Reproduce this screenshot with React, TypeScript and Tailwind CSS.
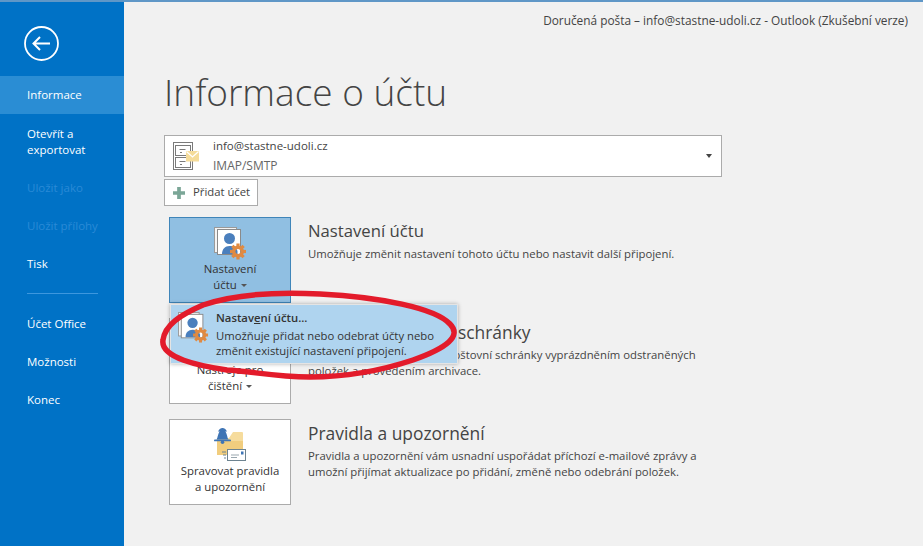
import React from "react";

const font = { fontFamily: '"Open Sans", "Noto Sans", sans-serif' };

function NavItem({ label, active, disabled }: { label: React.ReactNode; active?: boolean; disabled?: boolean }) {
  return (
    <div
      className={`flex min-h-[38px] items-center pl-[27px] text-[11.5px] leading-[16px] ${
        active ? "bg-[#2a8dd4] text-white" : disabled ? "text-[#2a8ad6]" : "text-white"
      }`}
    >
      <span>{label}</span>
    </div>
  );
}

function PersonGear({ size = 33 }: { size?: number }) {
  return (
    <svg width={size} height={size} viewBox="0 0 33 33" className="shrink-0">
      <rect x="0.500" y="0.500" width="22" height="25" fill="#f4f4f4" stroke="#9a9a9a" />
      <rect x="3.500" y="2.500" width="23" height="25" fill="#fff" stroke="#8a8a8a" />
      <circle cx="15.500" cy="11.500" r="5.500" fill="#4a7fbd" />
      <path d="M8 27c0-5 3-8 7.500-8s7 2 8 5v3z" fill="#4a7fbd" />
      <g transform="translate(24 24.500)" fill="#e08a42">
        {[0, 45, 90, 135, 180, 225, 270, 315].map((a) => (
          <rect key={a} x="-1.600" y="-8" width="3.200" height="4" transform={`rotate(${a})`} />
        ))}
        <circle r="4.300" fill="none" stroke="#e08a42" strokeWidth="3.400" />
      </g>
    </svg>
  );
}

function Cabinet() {
  return (
    <svg width="27" height="28" viewBox="0 0 27 28" className="shrink-0">
      <g fill="none" stroke="#7a7a7a">
        <rect x="0.500" y="0.500" width="19" height="27" />
        <rect x="2.500" y="3.500" width="15" height="10" />
        <rect x="2.500" y="15.500" width="15" height="10" />
        <path d="M6.500 7.500h6M6.500 19.500h6M7 10.500h2M7 22.500h2" />
      </g>
      <rect x="13" y="9" width="13" height="10.500" fill="#f5dc9a" />
      <path d="M13.500 9.500l6 5.500 6-5.500" fill="none" stroke="#fff" strokeWidth="1.200" />
    </svg>
  );
}

function BellFolder() {
  return (
    <svg width="32" height="33" viewBox="0 0 32 33" className="shrink-0">
      <path d="M3 10h12l4-6h9a1 1 0 0 1 1 1v21H3z" fill="#f6dc9d" />
      <path d="M3 13h26v14H3z" fill="#f1cd7e" />
      <path d="M2.500 11.500c1.500-1 1-8 6-11.500 5 3.500 4.500 10.500 6 11.500z" fill="#3f75b5" />
      <path d="M4 3.500C5 1 7 0 8.500 0S12 1 13 3.500z" fill="#3f75b5" />
      <rect x="0" y="11.500" width="17" height="1.800" rx="0.900" fill="#3f75b5" />
      <circle cx="8.500" cy="14.300" r="1.800" fill="#3f75b5" />
      <rect x="13.500" y="21.500" width="18" height="11" fill="#fff" stroke="#6d8390" />
      <rect x="27" y="23.500" width="2.500" height="3" fill="#3f75b5" />
      <path d="M17 27h8M17 29.500h6" stroke="#9aa7af" />
      <path d="M8 24h4M9 27h3M10 30h2" stroke="#6d8390" />
    </svg>
  );
}

function Caret() {
  return <span className="ml-[4px] inline-block h-0 w-0 border-x-[3px] border-t-[3px] border-x-transparent border-t-[#555] align-middle" />;
}

function Section({
  button,
  title,
  titleSize,
  body,
  active,
}: {
  button: React.ReactNode;
  title: string;
  titleSize: string;
  body: React.ReactNode;
  active?: boolean;
}) {
  return (
    <div className="flex h-[86px]">
      <div
        className={`ml-[5px] flex h-[86px] w-[122px] shrink-0 flex-col items-center justify-end border pb-[9px] text-center text-[11.4px] leading-[16px] text-[#333] ${
          active ? "border-[#3f85b9] bg-[#90bfe2]" : "border-[#ababab] bg-white"
        }`}
      >
        {button}
      </div>
      <div className="ml-[17px] pt-[2px]">
        <div className={`whitespace-nowrap ${titleSize} leading-[24px] text-[#444]`}>{title}</div>
        <div className="mt-[3px] whitespace-nowrap text-[11.33px] leading-[16px] text-[#444]">{body}</div>
      </div>
    </div>
  );
}

export default function App() {
  return (
    <div className="relative flex h-[546px] w-[923px] flex-col overflow-hidden bg-[#f1f1f1]" style={font}>
      <div className="h-[2px] shrink-0 bg-[#5f97c7]" />
      <div className="flex min-h-0 flex-1">
        <aside className="flex w-[124px] shrink-0 flex-col bg-[#0072c6]">
          <div className="flex h-[74px] items-start pl-[24px] pt-[24px]">
            <svg width="35" height="35" viewBox="0 0 35 35">
              <circle cx="17.500" cy="17.500" r="16.500" fill="none" stroke="#fff" strokeWidth="1.800" />
              <path d="M26 17.500H10M16 11l-6.500 6.500L16 24" fill="none" stroke="#fff" strokeWidth="2" />
            </svg>
          </div>
          <NavItem label="Informace" active />
          <div className="pb-[11px] pl-[27px] pt-[12px] text-[11.5px] leading-[16px] text-white">
            Otevřít a<br />exportovat
          </div>
          <NavItem label="Uložit jako" disabled />
          <NavItem label="Uložit přílohy" disabled />
          <NavItem label="Tisk" />
          <div className="mb-[11px] ml-[27px] mt-[10px] h-px w-[71px] bg-[#3d97de]" />
          <NavItem label="Účet Office" />
          <NavItem label="Možnosti" />
          <NavItem label="Konec" />
        </aside>
        <main className="min-w-0 flex-1 pl-[40px]">
          <div className="flex h-[34px] items-start justify-end pr-[15px] pt-[11px] text-[11.85px] leading-[15px] text-[#444]">
            Doručená pošta – info@stastne-udoli.cz - Outlook (Zkušební verze)
          </div>
          <h1 className="mt-[27px] h-[72px] text-[37px] font-light leading-[58px] text-[#444]">Informace o účtu</h1>
          <div className="flex h-[42px] w-[558px] items-center border border-[#ababab] bg-white pl-[8px] pr-[9px]">
            <Cabinet />
            <div className="ml-[13px] flex-1 leading-[19px] text-[#444]">
              <div className="-mt-[1px] text-[11.5px]">info@stastne-udoli.cz</div>
              <div className="mt-[1px] text-[12px] text-[#666]">IMAP/SMTP</div>
            </div>
            <span className="h-0 w-0 border-x-[3.500px] border-t-[4px] border-x-transparent border-t-[#444]" />
          </div>
          <div className="mt-[2px] flex h-[27px] w-[94px] items-center border border-[#ababab] bg-white pl-[8px] text-[11.3px] text-[#444]">
            <svg width="12" height="12" viewBox="0 0 13 13" className="shrink-0">
              <path d="M4.500 0h4v4.500H13v4H8.500V13h-4V8.500H0v-4h4.500z" fill="#7ba697" />
            </svg>
            <span className="ml-[8px]">Přidat účet</span>
          </div>
          <div className="mt-[11px] flex flex-col gap-[15px]">
            <Section
              active
              button={
                <>
                  <div className="mb-[1px]"><PersonGear /></div>
                  <div>Nastavení</div>
                  <div>účtu<Caret /></div>
                </>
              }
              title="Nastavení účtu"
              titleSize="text-[16.7px]"
              body="Umožňuje změnit nastavení tohoto účtu nebo nastavit další připojení."
            />
            <Section
              button={
                <>
                  <div>Nástroje pro</div>
                  <div>čištění<Caret /></div>
                </>
              }
              title="Vyčištění poštovní schránky"
              titleSize="text-[17.4px]"
              body={<>Umožňuje omezit velikost poštovní schránky vyprázdněním odstraněných<br />položek a provedením archivace.</>}
            />
            <Section
              button={
                <>
                  <div className="mb-[2px]"><BellFolder /></div>
                  <div>Spravovat pravidla</div>
                  <div>a upozornění</div>
                </>
              }
              title="Pravidla a upozornění"
              titleSize="text-[17.4px]"
              body={<>Pravidla a upozornění vám usnadní uspořádat příchozí e-mailové zprávy a<br />umožní přijímat aktualizace po přidání, změně nebo odebrání položek.</>}
            />
          </div>
        </main>
      </div>
      <div className="absolute left-[170px] top-[304px] flex h-[60px] w-[288px] border border-[#e4e4e4] bg-[#afd4ef] pl-[7px] pt-[7px] shadow-[0_0_4px_rgba(0,0,0,0.3)]">
        <PersonGear size={31} />
        <div className="ml-[7px] whitespace-nowrap text-[11.3px] leading-[15.500px] text-[#333]">
          <div className="-mt-[2px] mb-[2px] text-[11.3px] font-semibold">Nastav<span className="underline">e</span>ní účtu...</div>
          <div>Umožňuje přidat nebo odebrat účty nebo</div>
          <div>změnit existující nastavení připojení.</div>
        </div>
      </div>
      <svg className="pointer-events-none absolute left-[150px] top-[280px]" width="320" height="110" viewBox="0 0 320 110">
        <path
          d="M13 60C15 45 30 35 53 25C85 14 130 12 170 14C230 17 285 28 300 44C312 56 297 68 263 80C230 91 195 97 160 97C125 97 100 91 77 90C50 86 10 78 13 60Z"
          fill="none"
          stroke="#e31b2b"
          strokeWidth="5.500"
          strokeLinejoin="round"
        />
      </svg>
    </div>
  );
}
